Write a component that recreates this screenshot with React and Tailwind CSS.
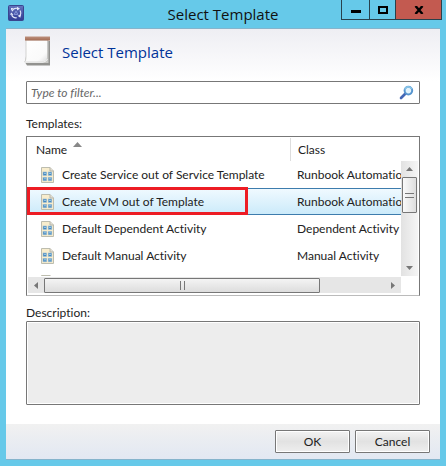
import React from "react";

const templates = [
  { name: "Create Service out of Service Template", type: "Runbook Automation Activity" },
  { name: "Create VM out of Template", type: "Runbook Automation Activity", selected: true },
  { name: "Default Dependent Activity", type: "Dependent Activity" },
  { name: "Default Manual Activity", type: "Manual Activity" },
  { name: "Default Parallel Activity", type: "Parallel Activity" },
];

function AppIcon() {
  return (
    <svg width="16" height="16" viewBox="0 0 16 16" aria-hidden="true">
      <defs>
        <linearGradient id="app" x1="0" y1="0" x2="0" y2="1">
          <stop offset="0" stopColor="#6573bd" />
          <stop offset="1" stopColor="#303b94" />
        </linearGradient>
      </defs>
      <rect x="0.5" y="0.5" width="15" height="15" rx="1" fill="url(#app)" stroke="#39458f" />
      <g fill="none" stroke="#e4e9fa" strokeWidth="1.1">
        <path d="M4 6.2A4.8 4.8 0 0 1 9.5 3.4" />
        <path d="M12 5.5A4.8 4.8 0 0 1 11 11.5" />
        <path d="M8.8 12.8A4.8 4.8 0 0 1 3.6 9.5" />
      </g>
      <path d="M9 1.8L12 3.8L9 5.4ZM13 9.6L12.3 12.8L9.7 10.8ZM1.8 9.5L3.5 7.4L5.4 10ZM3 3H5.5L3 5.5Z" fill="#e4e9fa" />
      <path d="M8 6.2L9.8 9.4H6.2Z" fill="none" stroke="#9aabe8" strokeWidth="0.8" />
    </svg>
  );
}

function NotepadIcon() {
  return (
    <svg width="28" height="30" viewBox="0 0 28 30" aria-hidden="true">
      <defs>
        <linearGradient id="page" x1="0" y1="0" x2="1" y2="1">
          <stop offset="0" stopColor="#ffffff" />
          <stop offset="0.75" stopColor="#fafafa" />
          <stop offset="1" stopColor="#dedede" />
        </linearGradient>
        <linearGradient id="binding" x1="0" y1="0" x2="0" y2="1">
          <stop offset="0" stopColor="#bd917e" />
          <stop offset="1" stopColor="#a36a52" />
        </linearGradient>
      </defs>
      <path d="M3 5H26V29.5H3L1.5 27Z" fill="#92928f" />
      <path d="M2 4H24.5V27H2Z" fill="#c9c9c6" />
      <path d="M2 4H23.5V22Q23 26 19 26H0.5Q2 25 2 21Z" fill="url(#page)" stroke="#b8b8b5" strokeWidth="0.6" />
      <path d="M0.5 26.2H19Q22 26 23.5 23" fill="none" stroke="#f5f5f5" />
      <rect x="1" y="0.5" width="25" height="4" fill="url(#binding)" />
    </svg>
  );
}

function SearchIcon() {
  return (
    <svg width="15" height="15" viewBox="0 0 15 15" aria-hidden="true">
      <path d="M2 13L6 9" stroke="#4467b5" strokeWidth="2.6" strokeLinecap="round" />
      <circle cx="9.4" cy="5.6" r="3.8" fill="#e3f3fc" stroke="#5795cf" strokeWidth="2" />
      <path d="M5.8 4.6A3.8 3.8 0 0 1 12.8 4" fill="none" stroke="#88c3e6" strokeWidth="1.8" />
    </svg>
  );
}

function TemplateIcon() {
  return (
    <svg className="block shrink-0" width="13" height="16" viewBox="0 0 13 16" aria-hidden="true">
      <path d="M0.5 0.5H9L12.5 4V15.5H0.5Z" fill="#f8edcd" stroke="#bdbdaf" />
      <path d="M9 0.5V4H12.5" fill="#e2dfd2" stroke="#b7b7ad" />
      <g fill="#4689bf" stroke="#9abbd2" strokeWidth="0.6">
        <rect x="2" y="5" width="3.6" height="3.4" />
        <rect x="7.2" y="5" width="3.6" height="3.4" />
        <rect x="2" y="10.4" width="3.6" height="3.4" />
        <rect x="7.2" y="10.4" width="3.6" height="3.4" />
      </g>
      <path d="M3 6.4H5M8 6.4H10M3 11.8H5M8 11.8H10" stroke="#b5dcf4" strokeWidth="0.8" />
    </svg>
  );
}

function Arrow({ d, w, h, label }) {
  return (
    <button type="button" aria-label={label} className="flex h-4 w-4 shrink-0 items-center justify-center">
      <svg width={w} height={h} viewBox={`0 0 ${w} ${h}`} aria-hidden="true">
        <path d={d} fill="#777777" />
      </svg>
    </button>
  );
}

function TitleBar() {
  return (
    <header className="grid h-7 grid-cols-[1fr_auto_1fr] items-start">
      <div className="pt-[5px] pl-2">
        <AppIcon />
      </div>
      <h1 className="font-['Open_Sans','Noto_Sans',sans-serif] text-[15px] leading-7 text-[#111111]">Select Template</h1>
      <div className="mr-1 flex h-5 w-[101px] justify-self-end border border-t-0 border-[#28414c]">
        <button type="button" aria-label="Minimize" className="flex w-7 items-center justify-center border-r border-[#28414c]">
          <svg width="10" height="10" viewBox="0 0 10 10" aria-hidden="true">
            <path d="M0 5H10V8H0Z" />
          </svg>
        </button>
        <button type="button" aria-label="Maximize" className="flex w-[26px] items-center justify-center border-r border-[#28414c]">
          <svg width="10" height="8" viewBox="0 0 10 8" aria-hidden="true">
            <path d="M1 1H9V7H1Z" fill="none" stroke="#000000" strokeWidth="2" />
          </svg>
        </button>
        <button type="button" aria-label="Close" className="flex flex-1 items-center justify-center bg-[#c35a50]">
          <svg width="10" height="8" viewBox="0 0 10 8" aria-hidden="true">
            <path d="M1.5 0L8.5 8M8.5 0L1.5 8" stroke="#000000" strokeWidth="2.4" />
          </svg>
        </button>
      </div>
    </header>
  );
}

function TemplateList() {
  return (
    <div className="relative mt-1 border border-[#777777] border-b-[#bbbbbb] bg-white p-px pb-0.5">
      <div className="grid grid-cols-[minmax(0,1fr)_17px]">
        <div className="h-[138px] overflow-hidden">
          <table aria-labelledby="templates-label" className="w-[526px] table-fixed border-separate border-spacing-0 text-left whitespace-nowrap">
            <thead>
              <tr className="h-[23px]">
                <th scope="col" className="w-[263px] border-r border-[#dddddd] p-0 pl-2 font-normal">
                  <span className="flex items-start gap-[6px]">
                    Name
                    <svg width="9" height="5" viewBox="0 0 9 5" aria-hidden="true">
                      <path d="M4.5 0L9 5H0Z" fill="#888888" />
                    </svg>
                  </span>
                </th>
                <th scope="col" className="p-0 pl-[7px] font-normal">Class</th>
              </tr>
            </thead>
            <tbody>
              {templates.map((t) => (
                <tr
                  key={t.name}
                  aria-selected={Boolean(t.selected)}
                  className={
                    t.selected
                      ? "h-[27px] bg-linear-to-b from-[#f1faff] to-[#caeafa] [&>td]:border-y [&>td]:border-[#3d7cad]"
                      : "h-[27px]"
                  }
                >
                  <td className="p-0 pl-[13px]">
                    <span className="flex items-center gap-2">
                      <TemplateIcon />
                      {t.name}
                    </span>
                  </td>
                  <td className="p-0 pl-[6px]">{t.type}</td>
                </tr>
              ))}
            </tbody>
          </table>
        </div>
        <div className="mt-[23px] flex flex-col items-center justify-between bg-linear-to-r from-[#e2e2e2] to-[#f5f5f5]">
          <Arrow label="Scroll up" w={7} h={4} d="M3.5 0L7 4H0Z" />
          <div className="mb-auto flex h-9 w-[15px] flex-col items-center justify-center gap-[3px] rounded-[1px] border border-[#777777] bg-linear-to-r from-[#fafafa] to-[#dddddd]">
            <span className="h-px w-[9px] bg-[#777777]" />
            <span className="h-px w-[9px] bg-[#777777]" />
          </div>
          <Arrow label="Scroll down" w={7} h={4} d="M0 0H7L3.5 4Z" />
        </div>
        <div className="mt-px flex h-4 items-center bg-[#e6e6e6]">
          <Arrow label="Scroll left" w={4} h={7} d="M4 0V7L0 3.5Z" />
          <div className="flex h-[15px] w-[74%] items-center justify-center gap-[3px] rounded-[1px] border border-[#777777] bg-linear-to-b from-[#f4f4f4] to-[#dddddd]">
            <span className="h-[9px] w-px bg-[#777777]" />
            <span className="h-[9px] w-px bg-[#777777]" />
          </div>
          <span className="grow" />
          <Arrow label="Scroll right" w={4} h={7} d="M0 0L4 3.5L0 7Z" />
        </div>
      </div>
      <div className="pointer-events-none absolute top-[50px] left-0 h-7 w-[221px] border-3 border-[#ed1c24]" />
    </div>
  );
}

const buttonClass =
  "h-[23px] w-[75px] rounded-[1px] border border-[#777777] bg-linear-to-b from-[#f3f3f3] via-[#e2e2e2] to-[#eeeeee] text-center inset-ring inset-ring-white";

export default function App() {
  return (
    <main className="flex min-h-screen flex-col bg-[#66c9e9] pb-[6px] font-[Lato,'Open_Sans',sans-serif] text-[12px] leading-4 text-[#222222] [font-variant-ligatures:none]">
      <TitleBar />
      <section className="mx-[6px] flex grow flex-col border-t border-b border-t-[#85b4cc] border-b-[#85b4cc] bg-white">
        <div className="flex h-[52px] items-start gap-[10px] bg-linear-to-b from-[#eeeef3] to-white pt-[7px] pl-[18px]">
          <NotepadIcon />
          <h2 className="pt-[6px] font-['Open_Sans','Noto_Sans',sans-serif] text-[15px] leading-5 text-[#003399]">Select Template</h2>
        </div>
        <div className="flex grow flex-col px-5 pb-[19px]">
          <div className="flex h-[23px] items-center rounded-[1px] border border-[#777777] bg-white pr-[5px] pl-1">
            <input
              type="text"
              aria-label="Filter templates"
              placeholder="Type to filter..."
              className="min-w-0 grow italic outline-none placeholder:text-[#666666]"
            />
            <button type="button" aria-label="Search">
              <SearchIcon />
            </button>
          </div>
          <h3 id="templates-label" className="mt-3">Templates:</h3>
          <TemplateList />
          <label htmlFor="description" className="mt-[9px]">Description:</label>
          <textarea
            id="description"
            readOnly
            className="min-h-[83px] grow resize-none rounded-[1px] border border-[#777777] bg-[#ededed] inset-ring inset-ring-white outline-none"
          />
        </div>
        <footer className="flex h-[35px] items-center justify-end gap-[5px] bg-linear-to-b from-[#f1f1f1] to-[#e2e8f2] pr-[10px]">
          <button type="button" className={buttonClass}>OK</button>
          <button type="button" className={buttonClass}>Cancel</button>
        </footer>
      </section>
    </main>
  );
}
